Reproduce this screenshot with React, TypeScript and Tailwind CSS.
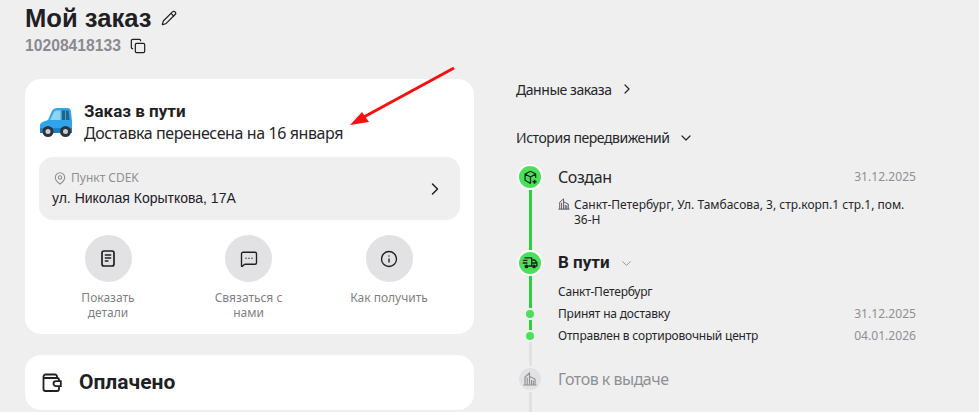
import { ChevronDown, ChevronRight, Copy, Info, MessageSquareMore, Pencil } from 'lucide-react';
import type { ReactNode } from 'react';

const sans = "font-['Noto_Sans','Liberation_Sans',sans-serif]";
const arial = "font-['Liberation_Sans',Arial,sans-serif]";
const heading = "font-['Roboto','Liberation_Sans',sans-serif]";

function CarIcon() {
  return (
    <svg width="34" height="31" viewBox="0 0 34 31">
      <path d="M1 25 L1 18 C2 15 6 14 9 13 L13 4 C14 2 16 1 18 1 L28 1 C31 1 32 3 32 5 L33 14 L33 25 Z" fill="#2fa4ea" />
      <path d="M11 13 L15 5 C15.500 4 16.500 3.500 18 3.500 L21.500 3.500 L21.500 13 Z" fill="#8fd3ee" />
      <path d="M23 3.500 L26 3.500 L26 13 L23 13 Z M27 3.500 L29.500 3.500 L30.500 13 L27 13 Z" fill="#2b5f7e" />
      <path d="M1 21 L33 21 L33 26 L1 26 Z" fill="#1d7fc4" />
      <circle cx="9" cy="24.500" r="5.500" fill="#30343a" />
      <circle cx="9" cy="24.500" r="2.500" fill="#c9ced3" />
      <circle cx="26.500" cy="24.500" r="5.500" fill="#30343a" />
      <circle cx="26.500" cy="24.500" r="2.500" fill="#c9ced3" />
    </svg>
  );
}

function PinIcon() {
  return (
    <svg width="12" height="13" viewBox="0 0 12 13" fill="none" stroke="#8f8f94" strokeWidth="1.100">
      <path d="M6 12 C3 9.800 1.300 7.800 1.300 5.500 A4.700 4.700 0 0 1 10.700 5.500 C10.700 7.800 9 9.800 6 12 Z" />
      <circle cx="6" cy="5.500" r="1.700" />
    </svg>
  );
}

function DocIcon() {
  return (
    <svg width="14" height="17" viewBox="0 0 14 17" fill="none" stroke="#1f2024" strokeWidth="1.700">
      <rect x="1" y="1" width="12" height="15" rx="2" />
      <path d="M3.800 5 H10.200 M3.800 8 H10.200 M3.800 11 H7.500" />
    </svg>
  );
}

function WalletIcon() {
  return (
    <svg width="20" height="20" viewBox="0 0 20 20" fill="none" stroke="#1f2024" strokeWidth="1.800">
      <path d="M15 5 V3.500 A2 2 0 0 0 13 1.500 H3.500 A2 2 0 0 0 1.500 3.500 V16 A2 2 0 0 0 3.500 18 H15 A2 2 0 0 0 17 16 V13.500" />
      <path d="M1.500 5 H15 A2 2 0 0 1 17 7 V8" />
      <path d="M18.800 8.200 H14 A2.500 2.500 0 0 0 14 13.200 H18.800 Z" />
    </svg>
  );
}

function CubeIcon() {
  return (
    <svg width="15" height="15" viewBox="0 0 16 16" fill="none" stroke="#1f2024" strokeWidth="1.300" strokeLinejoin="round">
      <path d="M8 1.300 L13.500 4.300 V8.500 M8 1.300 L2.200 4.300 V11 L8 14.500 M2.200 4.300 L8 7.500 L13.500 4.300 M8 7.500 V14.500" />
      <path d="M12.300 10.300 V14.700 M10.100 12.500 H14.500" strokeWidth="1.600" />
    </svg>
  );
}

function TruckIcon() {
  return (
    <svg width="16" height="12" viewBox="0 0 18 14" fill="none" stroke="#1f2024" strokeWidth="1.500" strokeLinejoin="round">
      <path d="M2.500 1 H11 V10.500 H7 M1 4 H6 M0.500 7 H6 M2.500 10.500 H3" />
      <path d="M11 3.500 H14.500 L17 6.500 V10.500 H15.500 M11 7 H17 M11 10.500 H12" />
      <circle cx="5" cy="11" r="1.400" fill="#1f2024" />
      <circle cx="13.700" cy="11" r="1.400" fill="#1f2024" />
    </svg>
  );
}

function BuildingIcon({ color, size }: { color: string; size: number }) {
  return (
    <svg width={size} height={size} viewBox="0 0 14 14" fill="none" stroke={color} strokeWidth="1.100">
      <path d="M0.500 13 H13.500 M2 13 V5 L6.500 1 V13 M6.500 4.500 L12 7 V13 M4.200 5.500 V13 M8.500 8 V13 M10.300 8.500 V13" />
    </svg>
  );
}

function Action({ icon, label }: { icon: ReactNode; label: ReactNode }) {
  return (
    <div className="flex w-[112px] flex-col items-center">
      <div className="flex h-[47px] w-[47px] items-center justify-center rounded-full bg-[#e2e2e4]">{icon}</div>
      <div className="mt-[8px] text-center text-[12px] leading-[15px] text-[#7f7f84]">{label}</div>
    </div>
  );
}

function StepCircle({ done, children }: { done: boolean; children: ReactNode }) {
  return (
    <div
      className={`flex h-[26px] w-[26px] shrink-0 items-center justify-center rounded-full border-2 ${
        done ? 'border-white bg-[#4be05a]' : 'border-[#efefef] bg-[#e2e2e4]'
      }`}
    >
      {children}
    </div>
  );
}

function Dot() {
  return <div className="my-[2px] h-[8px] w-[8px] shrink-0 rounded-full bg-[#4be05a]" />;
}

function GreenLine() {
  return <div className="w-[3px] flex-1 bg-[#2dcf3f]" />;
}

function GreyLine() {
  return <div className="w-[3px] flex-1 bg-[#e2e2e4]" />;
}

function SubRow({ gutter, text, date }: { gutter: ReactNode; text: string; date?: string }) {
  return (
    <div className="flex h-[22px]">
      <div className="flex w-[28px] flex-col items-center">{gutter}</div>
      <div className="ml-[14px] flex flex-1 items-center justify-between text-[12px]">
        <span className="tracking-[-0.200px] text-[#26262a]">{text}</span>
        {date && <span className="text-[12.100px] text-[#8f8f94]">{date}</span>}
      </div>
    </div>
  );
}

export default function App() {
  return (
    <div className={`relative flex h-[412px] w-[979px] overflow-hidden bg-[#efefef] ${sans}`}>
      {/* Left column */}
      <div className="ml-[25px] w-[449px] shrink-0">
        <div className={`mt-[2px] flex items-center leading-[32px] ${arial}`}>
          <h1 className="text-[25.600px] font-bold text-[#1f2024]">Мой заказ</h1>
          <Pencil size={16} strokeWidth={1.800} className="ml-[9px] text-[#1f2024]" />
        </div>
        <div className={`mt-[2px] flex items-center leading-[20px] ${arial}`}>
          <span className="text-[15.700px] font-bold text-[#8a8a90]">10208418133</span>
          <Copy size={16} strokeWidth={1.800} className="ml-[9px] text-[#1f2024]" />
        </div>

        <div className="mt-[23px] h-[255px] rounded-[16px] bg-white px-[14px] pt-[21px]">
          <div className="flex items-center">
            <CarIcon />
            <div className="ml-[11px]">
              <div className={`text-[17px] font-bold leading-[22px] text-[#1f2024] ${heading}`}>Заказ в пути</div>
              <div className="text-[16px] leading-[22px] tracking-[-0.400px] text-[#26262a]">Доставка перенесена на 16 января</div>
            </div>
          </div>
          <div className="mt-[13px] flex h-[63px] items-center justify-between rounded-[14px] bg-[#efefef] pl-[13px] pr-[15px]">
            <div>
              <div className="flex items-center gap-[5px] pl-[2px] text-[12px] leading-[18px] text-[#8f8f94]">
                <PinIcon />
                Пункт CDEK
              </div>
              <div className={`mt-[1px] text-[14px] leading-[20px] text-[#1f2024] ${arial}`}>ул. Николая Корыткова, 17А</div>
            </div>
            <ChevronRight size={20} strokeWidth={1.800} className="text-[#1f2024]" />
          </div>
          <div className="mt-[15px] flex justify-between pl-[13px] pr-[15px]">
            <Action icon={<DocIcon />} label={<>Показать<br />детали</>} />
            <Action icon={<MessageSquareMore size={18} strokeWidth={1.800} className="text-[#1f2024]" />} label={<>Связаться с<br />нами</>} />
            <Action icon={<Info size={18} strokeWidth={1.800} className="text-[#1f2024]" />} label="Как получить" />
          </div>
        </div>

        <div className="mt-[21px] flex h-[55px] items-center rounded-[16px] bg-white pl-[17px]">
          <WalletIcon />
          <span className={`ml-[17px] text-[21px] font-bold text-[#1f2024] ${heading}`}>Оплачено</span>
        </div>
      </div>

      {/* Right column */}
      <div className="ml-[42px] w-[400px] shrink-0 pt-[79px]">
        <div className="flex h-[20px] items-center text-[14px] tracking-[-0.450px] text-[#26262a]">
          Данные заказа
          <ChevronRight size={16} strokeWidth={1.800} className="ml-[8px]" />
        </div>
        <div className="mt-[29px] flex h-[19px] items-center text-[14px] tracking-[-0.450px] text-[#26262a]">
          История передвижений
          <ChevronDown size={16} strokeWidth={1.800} className="ml-[8px]" />
        </div>

        <div className="mt-[17px]">
          {/* Создан */}
          <div className="flex h-[86px]">
            <div className="flex w-[28px] flex-col items-center">
              <StepCircle done><CubeIcon /></StepCircle>
              <GreenLine />
            </div>
            <div className="ml-[14px] flex-1">
              <div className="flex h-[26px] items-center justify-between">
                <span className="text-[16px] tracking-[-0.400px] text-[#26262a]">Создан</span>
                <span className="text-[12.100px] text-[#8f8f94]">31.12.2025</span>
              </div>
              <div className="mt-[7px] flex text-[12px] leading-[15px] text-[#26262a]">
                <span className="mr-[4px] mt-[1px] shrink-0"><BuildingIcon color="#55555a" size={12} /></span>
                <span className="w-[335px]">Санкт-Петербург, Ул. Тамбасова, 3, стр.корп.1 стр.1, пом. 36-Н</span>
              </div>
            </div>
          </div>

          {/* В пути */}
          <div className="flex h-[31px]">
            <div className="flex w-[28px] flex-col items-center">
              <StepCircle done><TruckIcon /></StepCircle>
              <GreenLine />
            </div>
            <div className="ml-[14px] flex h-[26px] items-center">
              <span className={`text-[17px] font-bold text-[#1f2024] ${heading}`}>В пути</span>
              <ChevronDown size={15} strokeWidth={1.500} className="ml-[9px] text-[#8f8f94]" />
            </div>
          </div>
          <SubRow gutter={<GreenLine />} text="Санкт-Петербург" />
          <SubRow gutter={<><GreenLine /><Dot /><GreenLine /></>} text="Принят на доставку" date="31.12.2025" />
          <SubRow gutter={<><GreenLine /><Dot /><GreyLine /></>} text="Отправлен в сортировочный центр" date="04.01.2026" />
          <div className="flex h-[19px] w-[28px] flex-col items-center"><GreyLine /></div>

          {/* Готов к выдаче */}
          <div className="flex h-[60px]">
            <div className="flex w-[28px] flex-col items-center">
              <StepCircle done={false}><BuildingIcon color="#8f8f94" size={14} /></StepCircle>
              <GreyLine />
            </div>
            <div className="ml-[14px] flex h-[26px] items-center text-[16px] tracking-[-0.500px] text-[#8f8f94]">Готов к выдаче</div>
          </div>
        </div>
      </div>

      {/* Red annotation arrow over the screenshot */}
      <svg className="absolute left-0 top-0" width="979" height="412" fill="none">
        <path d="M454 68 L362 118" stroke="#f81010" strokeWidth="3" />
        <path d="M350 125 L362 112 L369 122 Z" fill="#f81010" />
      </svg>
    </div>
  );
}
